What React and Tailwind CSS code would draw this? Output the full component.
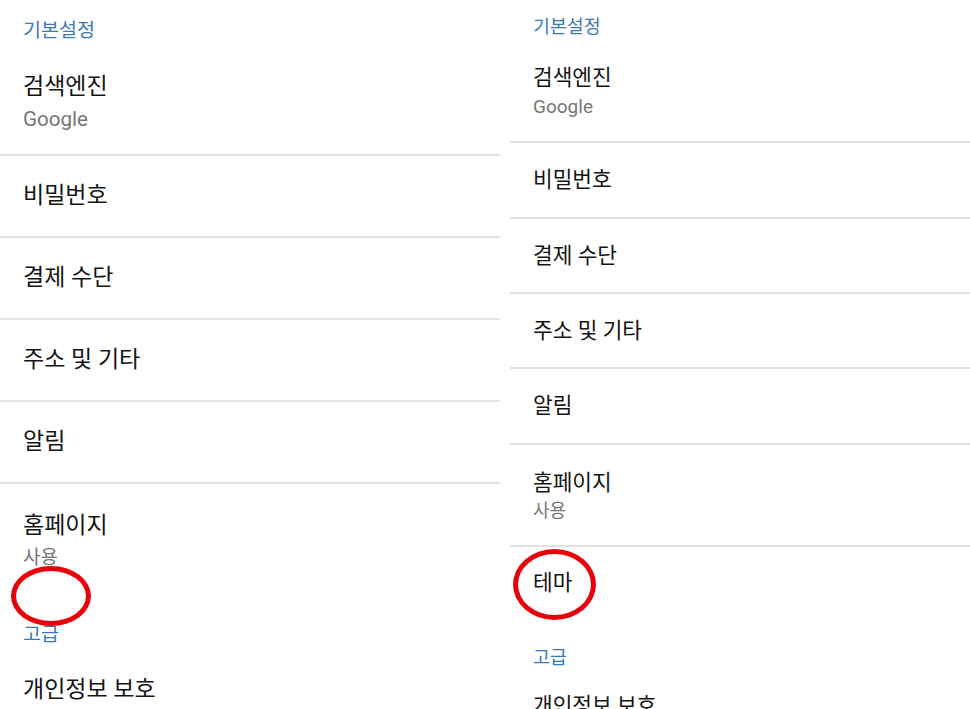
import React from "react";

const font = { fontFamily: 'Roboto, "Noto Sans CJK KR", "Noto Sans", sans-serif' };

function LRow({ children }) {
  return (
    <>
      <div className="h-[80px] flex items-center pl-[23px] text-[23px] leading-[28px] text-[#141414]">{children}</div>
      <div className="h-[2px] bg-[#e2e2e2]" />
    </>
  );
}

function RRow({ children, h }) {
  return (
    <>
      <div className={`${h} flex items-center pl-[23px] text-[21.4px] leading-[26px] text-[#141414]`}>{children}</div>
      <div className="h-[2px] bg-[#e2e2e2]" />
    </>
  );
}

export default function App() {
  return (
    <div
      className="relative w-[970px] h-[709px] overflow-hidden bg-white flex items-start gap-[10px]"
      style={font}
    >
      {/* Left panel */}
      <div className="w-[500px] shrink-0">
        <div className="h-[57px] pt-[20px] pl-[23px] text-[19.6px] leading-[22px] text-[#3b79b6] box-border">기본설정</div>
        <div className="pl-[23px] pt-[16px] h-[97px] box-border">
          <div className="text-[23px] leading-[28px] text-[#141414]">검색엔진</div>
          <div className="mt-[6px] text-[20.6px] leading-[24px] text-[#767676]">Google</div>
        </div>
        <div className="h-[2px] bg-[#e2e2e2]" />
        <LRow>비밀번호</LRow>
        <LRow>결제 수단</LRow>
        <LRow>주소 및 기타</LRow>
        <LRow>알림</LRow>
        <div className="pl-[23px] pt-[28px]">
          <div className="text-[23px] leading-[28px] text-[#141414]">홈페이지</div>
          <div className="mt-[6px] text-[19px] leading-[24px] text-[#767676]">사용</div>
          <div className="mt-[54px] text-[19.6px] leading-[22px] text-[#3b79b6]">고급</div>
          <div className="mt-[30px] text-[23px] leading-[28px] text-[#141414]">개인정보 보호</div>
        </div>
      </div>

      {/* Right panel */}
      <div className="flex-1">
        <div className="h-[38px] pt-[17px] pl-[23px] text-[18.4px] leading-[20px] text-[#3b79b6] box-border">기본설정</div>
        <div className="pl-[23px] pt-[27px] h-[103px] box-border">
          <div className="text-[21.4px] leading-[26px] text-[#141414]">검색엔진</div>
          <div className="mt-[5px] text-[19px] leading-[22px] text-[#767676]">Google</div>
        </div>
        <div className="h-[2px] bg-[#e2e2e2]" />
        <RRow h="h-[74px]">비밀번호</RRow>
        <RRow h="h-[73px]">결제 수단</RRow>
        <RRow h="h-[73px]">주소 및 기타</RRow>
        <RRow h="h-[74px]">알림</RRow>
        <div className="pl-[23px] pt-[25px] h-[100px] box-border">
          <div className="text-[21.4px] leading-[26px] text-[#141414]">홈페이지</div>
          <div className="mt-[4px] text-[18px] leading-[22px] text-[#767676]">사용</div>
        </div>
        <div className="h-[2px] bg-[#e2e2e2]" />
        <div className="h-[72px] flex items-center pl-[23px] text-[21.4px] leading-[26px] text-[#141414]">테마</div>
        <div className="pl-[23px]">
          <div className="mt-[29px] text-[18.4px] leading-[20px] text-[#3b79b6]">고급</div>
          <div className="mt-[25px] text-[21.4px] leading-[26px] text-[#141414]">개인정보 보호</div>
        </div>
      </div>

      {/* Red annotation ellipses */}
      <div className="absolute left-[11px] top-[566px] w-[80px] h-[60px] rounded-[50%] border-[5px] border-[#e8000b]" />
      <div className="absolute left-[513px] top-[549px] w-[83px] h-[71px] rounded-[50%] border-[5px] border-[#e8000b]" />
    </div>
  );
}
